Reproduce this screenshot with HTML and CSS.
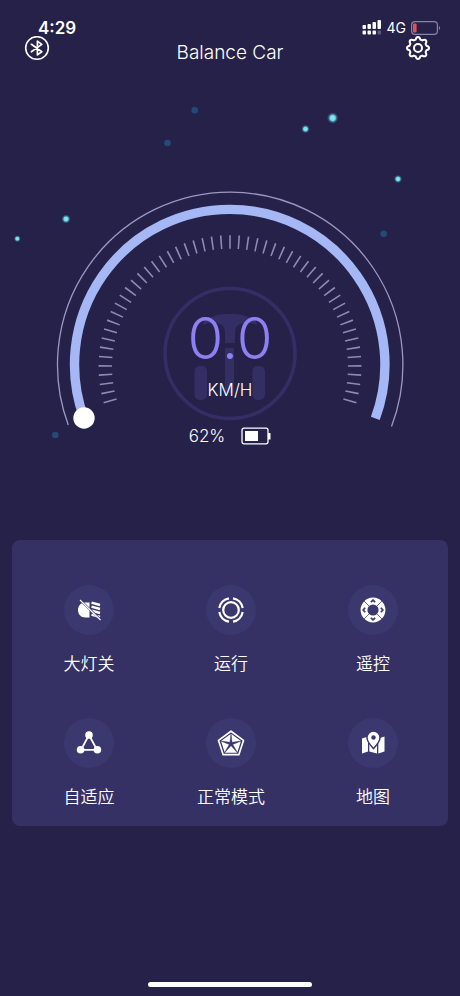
FILE: index.html
```html
<!DOCTYPE html>
<html lang="zh-CN">
<head>
<meta charset="utf-8">
<meta name="viewport" content="width=device-width, initial-scale=1">
<title>Balance Car</title>
<link rel="stylesheet" href="styles.css">
</head>
<body>
<div class="app">
  <div class="status">
    <span class="status-time">4:29</span>
    <span class="status-right">
      <svg class="signal" width="20" height="16" viewBox="0 0 20 16" aria-hidden="true">
        <g fill="#fff">
          <rect x="0.500" y="5" width="3.500" height="4" rx="1"/><rect x="5.500" y="4" width="3.500" height="5" rx="1"/>
          <rect x="10.500" y="2" width="3.500" height="7" rx="1"/><rect x="15.500" y="0" width="3.500" height="9" rx="1"/>
          <rect x="0.500" y="10.500" width="3.500" height="4" rx="1"/><rect x="5.500" y="10.500" width="3.500" height="4" rx="1"/>
          <rect x="10.500" y="10.500" width="3.500" height="4" rx="1"/>
        </g>
        <rect x="15.500" y="10.500" width="3.500" height="4" rx="1" fill="#5c5878"/>
      </svg>
      <span class="network">4G</span>
      <svg width="30" height="14" viewBox="0 0 30 14" aria-hidden="true">
        <rect x="0.6" y="0.6" width="25.8" height="12.8" rx="3.4" fill="none" stroke="#8984a4" stroke-width="1.2"/>
        <rect x="2" y="2.5" width="3.6" height="9" rx="1.2" fill="#e7505a"/>
        <path d="M27.8 4.8c1.6.8 1.6 3.6 0 4.4z" fill="#8984a4"/>
      </svg>
    </span>
  </div>

  <header class="header">
    <h1 class="title">Balance Car</h1>
    <button class="icon-button bluetooth" type="button" aria-label="Bluetooth">
      <svg width="26" height="26" viewBox="0 0 26 26" fill="none" stroke="#fff" aria-hidden="true">
        <circle cx="13" cy="12" r="11.3" stroke-width="1.6"/>
        <path d="M7.400 8.300L17.800 15.700L13.400 18.900V5.200L17.800 8.400L7.400 15.800" stroke-width="1.700" stroke-linejoin="round" stroke-linecap="round"/>
      </svg>
    </button>
    <button class="icon-button settings" type="button" aria-label="Settings">
      <svg width="26" height="26" viewBox="0 0 26 26" fill="none" stroke="#fff" stroke-width="2" stroke-linejoin="round" aria-hidden="true">
        <path d="M10.7 3.6Q11.2 1 13 1Q14.8 1 15.3 3.6L17.2 4.4Q19.5 3 20.8 4.2Q22 5.500 20.600 7.800L21.400 9.700Q24 10.200 24 12Q24 13.800 21.400 14.300L20.600 16.200Q22 18.500 20.800 19.800Q19.500 21 17.200 19.600L15.300 20.400Q14.800 23 13 23Q11.200 23 10.700 20.400L8.800 19.600Q6.500 21 5.200 19.800Q4 18.500 5.400 16.200L4.600 14.300Q2 13.800 2 12Q2 10.200 4.600 9.700L5.400 7.800Q4 5.500 5.200 4.200Q6.500 3 8.800 4.400Z"/>
        <circle cx="13" cy="12" r="4"/>
      </svg>
    </button>
  </header>

  <main>
    <section class="gauge" aria-label="Speed">
      <svg class="dial" viewBox="0 68 460 472" aria-hidden="true">
        <defs>
          <radialGradient id="glow">
            <stop offset="0" stop-color="#7cf0f4"/><stop offset=".45" stop-color="#70dde6"/>
            <stop offset=".7" stop-color="#5fb8cc" stop-opacity=".4"/><stop offset="1" stop-color="#4b90b0" stop-opacity="0"/>
          </radialGradient>
        </defs>
        <g fill="url(#glow)">
          <circle cx="332.700" cy="118" r="5.800"/><circle cx="305.500" cy="129" r="4.300"/>
          <circle cx="398" cy="179" r="4.200"/><circle cx="66" cy="219" r="4.600"/><circle cx="17.300" cy="238.700" r="3.500"/>
        </g>
        <g fill="#244b78">
          <circle cx="194.700" cy="110.300" r="3.300"/><circle cx="167.500" cy="143" r="3.300"/>
          <circle cx="383.700" cy="233.700" r="3.300"/><circle cx="55.300" cy="435" r="3.300"/>
        </g>
        <g fill="none">
          <path d="M68.300 425A172.700 172.700 0 1 1 391.500 426.500" stroke="#9c98c4" stroke-width="1.300"/>
          <path d="M84 418A155.200 155.200 0 1 1 375.300 418.400" stroke="#a5b8f5" stroke-width="9.400"/>
          <path class="ticks" pathLength="521.8" d="M110.300 401.600A124.700 124.700 0 1 1 349.700 401.600"/>
          <circle cx="230" cy="353.500" r="65" stroke="#332e63" stroke-width="3.600"/>
        </g>
        <g fill="#332e63">
          <path d="M203 325Q203 318 212 317Q218 314 224 314H236Q242 314 248 317Q257 318 257 325Q249 321 240 324Q235 326 235 333V343H225V333Q225 326 220 324Q211 321 203 325Z"/>
          <rect x="225" y="348" width="9" height="45" rx="1"/>
          <rect x="194.500" y="366" width="12.500" height="34" rx="5"/><rect x="252.500" y="366" width="12.500" height="34" rx="5"/>
        </g>
        <circle cx="84" cy="418" r="10.700" fill="#fff"/>
      </svg>
      <div class="readout">
        <div class="speed">0.0</div>
        <div class="unit">KM/H</div>
        <div class="battery">
          <span>62%</span>
          <svg width="30" height="18" viewBox="0 0 30 18" aria-hidden="true">
            <rect x="1" y="1.200" width="26" height="15.600" rx="2" fill="none" stroke="#fff" stroke-width="1.300"/>
            <rect x="4" y="4" width="13" height="10" fill="#fff"/><rect x="27" y="6" width="2.500" height="6.500" fill="#fff"/>
          </svg>
        </div>
      </div>
    </section>

    <section class="panel" aria-label="Controls">
      <button class="control" type="button">
        <span class="disc"><svg width="26" height="26" viewBox="0 0 26 26" aria-hidden="true">
          <path d="M13.500 5.500V20.500H9.500C4.500 20.500 2 17 2 13S4.500 5.500 9.500 5.500Z" fill="#fff"/>
          <path d="M15.500 5.600L24 8M15.500 9.600L24 12M15.500 13.600L24 16M15.500 17.600L24 20" stroke="#fff" stroke-width="2.500"/>
          <path d="M4.500 3.500L25 23" stroke="#3b386f" stroke-width="2.200"/><path d="M4 3L24.500 23" stroke="#fff" stroke-width="1.100"/>
        </svg></span>
        <span class="label">大灯关</span>
      </button>
      <button class="control" type="button">
        <span class="disc"><svg width="26" height="26" viewBox="0 0 26 26" fill="none" stroke="#fff" stroke-width="2.200" aria-hidden="true">
          <circle cx="13" cy="13" r="7.800"/>
          <path d="M15 1.300A11.800 11.800 0 0 1 24.700 11M24.700 15A11.800 11.800 0 0 1 15 24.700M11 24.700A11.800 11.800 0 0 1 1.300 15M1.300 11A11.800 11.800 0 0 1 11 1.300"/>
        </svg></span>
        <span class="label">运行</span>
      </button>
      <button class="control" type="button">
        <span class="disc"><svg width="26" height="26" viewBox="0 0 26 26" fill="none" aria-hidden="true">
          <circle cx="13" cy="13" r="9" stroke="#fff" stroke-width="6.800"/>
          <path d="M4 4L9 9M22 4L17 9M4 22L9 17M22 22L17 17" stroke="#6d699a" stroke-width="1"/>
          <path d="M10.800 5.200L13 3.200L15.200 5.200M10.800 20.800L13 22.800L15.200 20.800M5.200 10.800L3.200 13L5.200 15.200M20.800 10.800L22.800 13L20.800 15.200" stroke="#3b386f" stroke-width="1.700"/>
        </svg></span>
        <span class="label">遥控</span>
      </button>
      <button class="control" type="button">
        <span class="disc"><svg width="26" height="26" viewBox="0 0 26 26" aria-hidden="true">
          <path d="M13 5L5 19.800H21Z" fill="none" stroke="#fff" stroke-width="1.800"/>
          <g fill="#fff"><circle cx="13" cy="5" r="3.800"/><circle cx="4.600" cy="19.700" r="3.800"/><circle cx="21.400" cy="19.700" r="3.800"/></g>
        </svg></span>
        <span class="label">自适应</span>
      </button>
      <button class="control" type="button">
        <span class="disc"><svg width="28" height="26" viewBox="0 0 28 26" aria-hidden="true">
          <path d="M14 1.200L26.500 10.400L21.800 24.700H6.200L1.500 10.400Z" fill="none" stroke="#fff" stroke-width="1.700" stroke-linejoin="round"/>
          <path d="M14 3.800L24 11L20.200 22.700H7.800L4 11Z" fill="#fff"/>
          <path d="M14 3L15.100 12.300L25 10.800L15.800 14.400L21 23.500L14 15.700L7 23.500L12.200 14.400L3 10.800L12.900 12.300Z" fill="#3b386f" stroke="#3b386f" stroke-width="0.400"/>
        </svg></span>
        <span class="label">正常模式</span>
      </button>
      <button class="control" type="button">
        <span class="disc"><svg width="26" height="26" viewBox="0 0 26 26" aria-hidden="true">
          <path d="M2 8.500L8 6.500V21.500L2 23.500ZM9.300 6.500L17 9V23.500L9.300 21.500ZM18.300 8.500L24.500 6.500V21.500L18.300 23.500Z" fill="#fff"/>
          <path d="M13.500 17.500C10 13.500 7.700 10.700 7.700 7.500A5.800 5.800 0 0 1 19.300 7.500C19.300 10.700 17 13.500 13.500 17.500Z" fill="#fff" stroke="#3b386f" stroke-width="3"/>
          <path d="M13.500 17.500C10 13.500 7.700 10.700 7.700 7.500A5.800 5.800 0 0 1 19.300 7.500C19.300 10.700 17 13.500 13.500 17.500Z" fill="#fff"/>
          <circle cx="13.500" cy="7.500" r="2.200" fill="#3b386f"/>
        </svg></span>
        <span class="label">地图</span>
      </button>
    </section>
  </main>
  <div class="home-bar"></div>
</div>
</body>
</html>
```
FILE: styles.css
```css
* { box-sizing: border-box; }

body {
  margin: 0;
  background: #262149;
  color: #fff;
  font-family: Inter, "Noto Sans CJK SC", sans-serif;
}

button {
  border: 0;
  padding: 0;
  background: none;
  color: inherit;
  font: inherit;
  cursor: pointer;
}

svg { display: block; }

.app {
  display: flex;
  flex-direction: column;
  min-height: 100vh;
}

.status {
  display: flex;
  justify-content: space-between;
  align-items: center;
  height: 36px;
  padding: 20px 19px 0 38px;
}

.status-time {
  font-size: 17px;
  line-height: 16px;
  font-weight: 600;
}

.status-right {
  display: flex;
  align-items: center;
  gap: 5px;
}

.network {
  font-size: 14px;
  line-height: 16px;
}

.header {
  display: grid;
  grid-template-columns: 1fr 1fr;
  align-items: start;
  height: 32px;
}

.title {
  grid-area: 1 / 1 / 2 / 3;
  margin: 0;
  font-size: 19px;
  line-height: 34px;
  font-weight: 300;
  text-align: center;
}

.bluetooth {
  grid-area: 1 / 1;
  justify-self: start;
  margin-left: 24px;
}

.settings {
  grid-area: 1 / 2;
  justify-self: end;
  margin-right: 29px;
}

.gauge { display: grid; }

.gauge > * { grid-area: 1 / 1; }

.dial { width: 100%; }

.ticks {
  stroke: #8f8ab4;
  stroke-width: 13.5;
  stroke-dasharray: 1.8 8.2;
}

.readout {
  display: flex;
  flex-direction: column;
  align-items: center;
  padding-top: 240px;
}

.speed {
  color: #8d80f3;
  font-size: 58px;
  line-height: 60px;
  font-weight: 350;
}

.unit {
  margin-top: 10px;
  font-size: 17px;
  line-height: 24px;
  font-weight: 300;
}

.battery {
  display: flex;
  align-items: center;
  gap: 16px;
  margin-top: 22px;
  font-size: 17px;
  line-height: 24px;
  font-weight: 300;
}

.panel {
  display: grid;
  grid-template-columns: repeat(3, 1fr);
  row-gap: 42px;
  margin: 0 12px;
  padding: 45px 4px 17px 6px;
  border-radius: 8px;
  background: #353165;
}

.control {
  display: flex;
  flex-direction: column;
  align-items: center;
  gap: 17px;
}

.disc {
  display: grid;
  place-items: center;
  width: 50px;
  height: 50px;
  border-radius: 50%;
  background: #3b386f;
}

.label {
  font-size: 17px;
  line-height: 24px;
  font-weight: 350;
}

.home-bar {
  width: 164px;
  height: 5px;
  margin: auto auto 9px;
  border-radius: 3px;
  background: #fff;
}
```
